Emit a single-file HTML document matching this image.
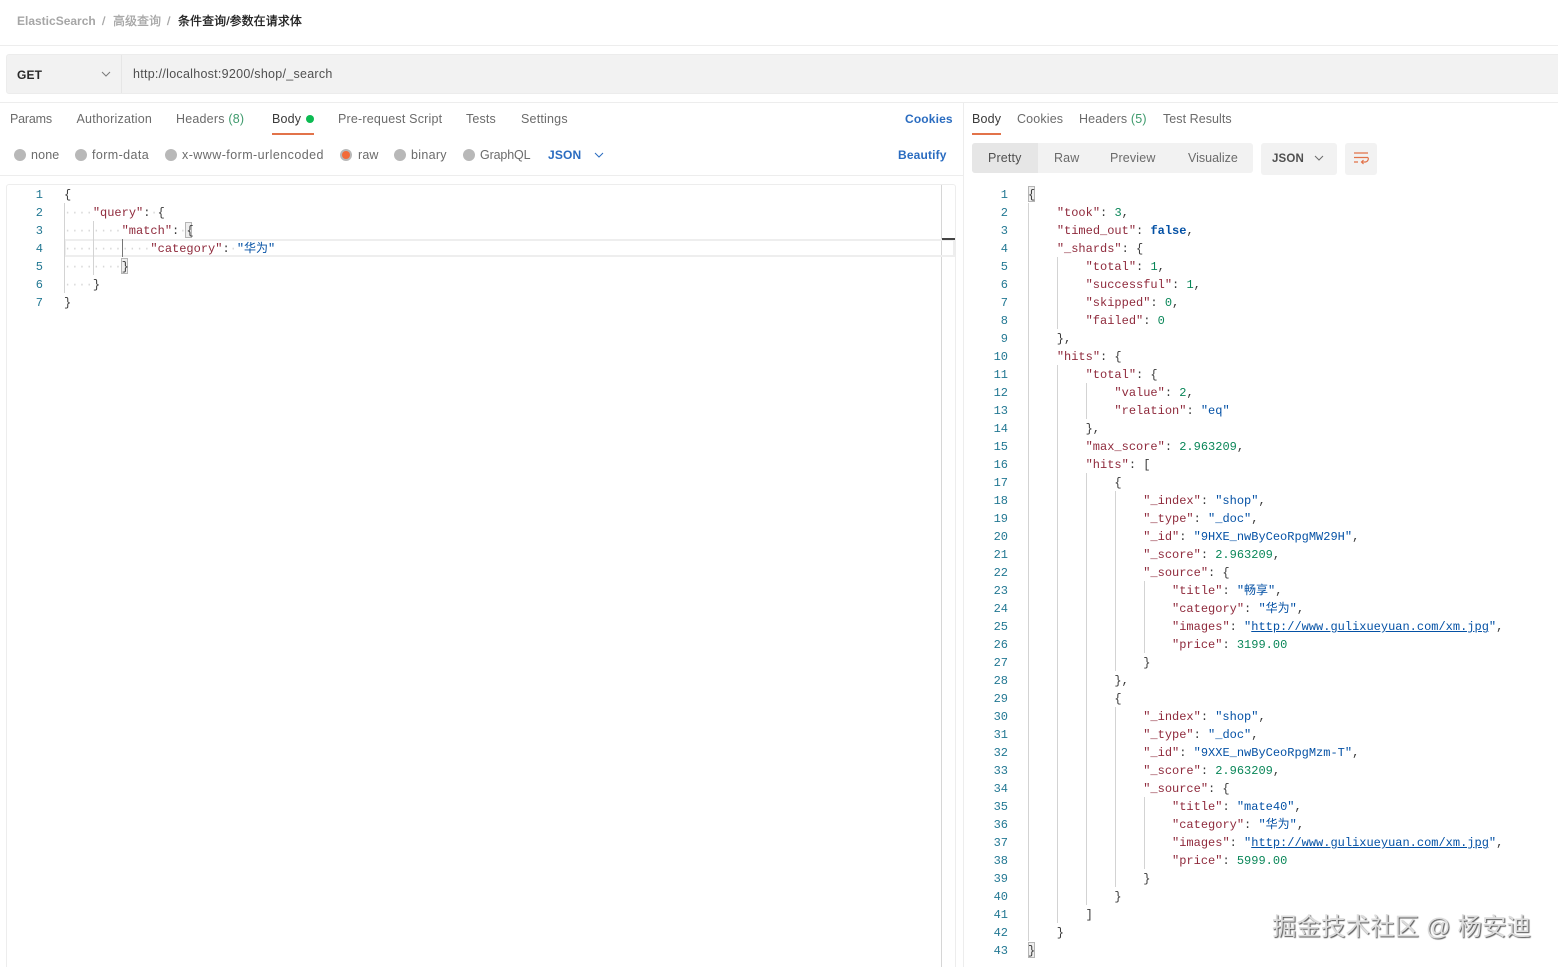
<!DOCTYPE html>
<html><head><meta charset="utf-8"><style>
html,body{margin:0;padding:0;background:#fff}
#r{position:relative;width:1558px;height:967px;overflow:hidden;background:#fff;font-family:"Liberation Sans","Noto Sans CJK SC",sans-serif;font-size:12.5px;color:#6b6b6b}
.a{position:absolute;white-space:pre}
.t{position:absolute;white-space:pre;line-height:18px;letter-spacing:.15px}
.bx{position:absolute}
.cd{position:absolute;white-space:pre;font-family:"Liberation Mono","Noto Sans CJK SC",monospace;font-size:12px;line-height:18px;height:18px;color:#3a3a3a;margin-top:1px}
.ln{position:absolute;font-family:"Liberation Mono",monospace;font-size:12px;line-height:18px;height:18px;color:#237893;text-align:right;width:30px;margin-top:1px}
.k{color:#8f2a3c}.s{color:#0451a5}.n{color:#098658}.b{color:#0451a5;font-weight:bold}
.u{text-decoration:underline}.d{color:#d8d8d8}
.g{position:absolute;width:1px;background:#d3d3d3}
.rd{position:absolute;width:12px;height:12px;border-radius:50%;background:#b8b8b8;top:149px}
.br{position:absolute;width:7px;height:16px;background:#eee;border:1px solid #b5b5b5;box-sizing:border-box}
</style></head><body><div id="r">
<div class="t" style="left:17px;top:12px;color:#a6a6a6;font-weight:bold;font-size:12px;letter-spacing:0">ElasticSearch</div>
<div class="t" style="left:102px;top:12px;color:#a6a6a6;font-size:12px;-webkit-text-stroke:.3px #a6a6a6">/</div>
<div class="t" style="left:113px;top:12px;color:#a6a6a6;font-size:12px;letter-spacing:0;-webkit-text-stroke:.3px #a6a6a6">高级查询</div>
<div class="t" style="left:167px;top:12px;color:#a6a6a6;font-size:12px;-webkit-text-stroke:.3px #a6a6a6">/</div>
<div class="t" style="left:178px;top:12px;color:#1c1c1c;font-size:12px;letter-spacing:.05px;-webkit-text-stroke:.3px #1c1c1c">条件查询/参数在请求体</div>
<div class="bx" style="left:0;top:45px;width:1558px;height:1px;background:#ededed"></div>
<div class="bx" style="left:6px;top:54px;width:1560px;height:40px;background:#f2f2f2;border:1px solid #ececec;box-sizing:border-box;border-radius:3px"></div>
<div class="bx" style="left:121px;top:55px;width:1px;height:38px;background:#e6e6e6"></div>
<div class="t" style="left:17px;top:66px;color:#2a2a2a;font-weight:bold;font-size:12px">GET</div>
<svg class="a" style="left:101px;top:71px" width="10" height="7" viewBox="0 0 10 7"><path d="M1 1l4 4 4-4" fill="none" stroke="#7a7a7a" stroke-width="1"/></svg>
<div class="t" style="left:133px;top:65px;color:#505050;letter-spacing:.27px">http://localhost:9200/shop/_search</div>
<div class="bx" style="left:0;top:102px;width:1558px;height:1px;background:#ededed"></div>
<div class="t" style="left:10px;top:110px;letter-spacing:-.2px">Params</div>
<div class="t" style="left:76.5px;top:110px;letter-spacing:.2px">Authorization</div>
<div class="t" style="left:176px;top:110px;letter-spacing:.2px">Headers <span style="color:#3e9a6c">(8)</span></div>
<div class="t" style="left:272px;top:110px;color:#3a3a3a">Body</div>
<div class="bx" style="left:306px;top:115px;width:8px;height:8px;border-radius:50%;background:#0cbb52"></div>
<div class="bx" style="left:272px;top:133px;width:42px;height:2px;background:#e2734a"></div>
<div class="t" style="left:338px;top:110px;letter-spacing:.2px">Pre-request Script</div>
<div class="t" style="left:466px;top:110px">Tests</div>
<div class="t" style="left:521px;top:110px;letter-spacing:.2px">Settings</div>
<div class="t" style="left:905px;top:110px;color:#2a6cc0;font-weight:bold;font-size:12px">Cookies</div>
<div class="rd" style="left:14px"></div><div class="t" style="left:31px;top:146px">none</div>
<div class="rd" style="left:75px"></div><div class="t" style="left:92px;top:146px;letter-spacing:.4px">form-data</div>
<div class="rd" style="left:165px"></div><div class="t" style="left:182px;top:146px;letter-spacing:.44px">x-www-form-urlencoded</div>
<div class="rd" style="left:340px"></div><div class="bx" style="left:342px;top:151px;width:8px;height:8px;border-radius:50%;background:#f26b3a"></div><div class="t" style="left:358px;top:146px">raw</div>
<div class="rd" style="left:394px"></div><div class="t" style="left:411px;top:146px;letter-spacing:.3px">binary</div>
<div class="rd" style="left:463px"></div><div class="t" style="left:480px;top:146px;letter-spacing:-.15px">GraphQL</div>
<div class="t" style="left:548px;top:146px;color:#2a6cc0;font-weight:bold;font-size:12px">JSON</div>
<svg class="a" style="left:594px;top:152px" width="10" height="7" viewBox="0 0 10 7"><path d="M1 1l4 4 4-4" fill="none" stroke="#2a6cc0" stroke-width="1"/></svg>
<div class="t" style="left:898px;top:146px;color:#2a6cc0;font-weight:bold;font-size:12px">Beautify</div>
<div class="bx" style="left:0;top:175px;width:963px;height:1px;background:#ededed"></div>
<div class="bx" style="left:963px;top:103px;width:1px;height:864px;background:#ededed"></div>
<div class="t" style="left:972px;top:110px;color:#3a3a3a">Body</div>
<div class="bx" style="left:972px;top:133px;width:29px;height:2px;background:#e2734a"></div>
<div class="t" style="left:1017px;top:110px">Cookies</div>
<div class="t" style="left:1079px;top:110px">Headers <span style="color:#3e9a6c">(5)</span></div>
<div class="t" style="left:1163px;top:110px;letter-spacing:.05px">Test Results</div>
<div class="bx" style="left:972px;top:143px;width:281px;height:30px;background:#f2f2f2;border-radius:3px"></div>
<div class="bx" style="left:972px;top:143px;width:66px;height:30px;background:#e6e6e6;border-radius:3px 0 0 3px"></div>
<div class="t" style="left:988px;top:149px;color:#505050">Pretty</div>
<div class="t" style="left:1054px;top:149px">Raw</div>
<div class="t" style="left:1110px;top:149px">Preview</div>
<div class="t" style="left:1188px;top:149px;letter-spacing:0">Visualize</div>
<div class="bx" style="left:1261px;top:143px;width:76px;height:32px;background:#f2f2f2;border-radius:3px"></div>
<div class="t" style="left:1272px;top:150px;color:#505050;font-weight:bold;font-size:11.5px">JSON</div>
<svg class="a" style="left:1314px;top:155px" width="10" height="7" viewBox="0 0 10 7"><path d="M1 1l4 4 4-4" fill="none" stroke="#6b6b6b" stroke-width="1"/></svg>
<div class="bx" style="left:1345px;top:143px;width:32px;height:32px;background:#f2f2f2;border-radius:3px"></div>
<svg class="a" style="left:1353px;top:151px" width="16" height="16" viewBox="0 0 16 16"><path d="M1 2h14M1 6.500h14M1 11h4M15 6.500c.8 1.500 0 4-2.500 4.500H8.500M10.500 9l-2 2 2 2" fill="none" stroke="#e2734a" stroke-width="1.200"/></svg>

<!-- left editor -->
<div class="bx" style="left:6px;top:184px;width:950px;height:800px;border:1px solid #ededed;box-sizing:border-box;border-radius:3px"></div>
<div class="bx" style="left:941px;top:185px;width:1px;height:782px;background:#d6d6d6"></div>
<div class="bx" style="left:64px;top:239px;width:891px;height:18px;border:2px solid #eee;box-sizing:border-box;border-right-width:2px"></div>
<div class="bx" style="left:942px;top:238px;width:13px;height:2px;background:#444"></div>
<div class="g" style="left:64px;top:203px;height:90px"></div>
<div class="g" style="left:93px;top:221px;height:54px"></div>
<div class="g" style="left:122px;top:239px;height:18px;background:#777"></div>
<div class="br" style="left:185px;top:222px"></div>
<div class="br" style="left:121px;top:258px"></div>
<div class="ln" style="left:13px;top:185px">1</div><div class="cd" style="left:64px;top:185px">{</div>
<div class="ln" style="left:13px;top:203px">2</div><div class="cd" style="left:64px;top:203px"><span class="d">····</span><span class="k">"query"</span>:<span class="d">·</span>{</div>
<div class="ln" style="left:13px;top:221px">3</div><div class="cd" style="left:64px;top:221px"><span class="d">········</span><span class="k">"match"</span>:<span class="d">·</span>{</div>
<div class="ln" style="left:13px;top:239px">4</div><div class="cd" style="left:64px;top:239px"><span class="d">············</span><span class="k">"category"</span>:<span class="d">·</span><span class="s">"华为"</span></div>
<div class="ln" style="left:13px;top:257px">5</div><div class="cd" style="left:64px;top:257px"><span class="d">········</span>}</div>
<div class="ln" style="left:13px;top:275px">6</div><div class="cd" style="left:64px;top:275px"><span class="d">····</span>}</div>
<div class="ln" style="left:13px;top:293px">7</div><div class="cd" style="left:64px;top:293px">}</div>

<!-- right editor -->
<div class="g" style="left:1028px;top:203px;height:738px"></div>
<div class="g" style="left:1057px;top:257px;height:72px"></div>
<div class="g" style="left:1057px;top:365px;height:558px"></div>
<div class="g" style="left:1086px;top:383px;height:36px"></div>
<div class="g" style="left:1086px;top:473px;height:432px"></div>
<div class="g" style="left:1115px;top:491px;height:180px"></div>
<div class="g" style="left:1115px;top:707px;height:180px"></div>
<div class="g" style="left:1144px;top:581px;height:72px"></div>
<div class="g" style="left:1144px;top:797px;height:72px"></div>
<div class="br" style="left:1028px;top:186px"></div>
<div class="br" style="left:1028px;top:942px"></div>
<div class="ln" style="left:978px;top:185px">1</div><div class="cd" style="left:1028px;top:185px">{</div>
<div class="ln" style="left:978px;top:203px">2</div><div class="cd" style="left:1028px;top:203px">    <span class="k">"took"</span>: <span class="n">3</span>,</div>
<div class="ln" style="left:978px;top:221px">3</div><div class="cd" style="left:1028px;top:221px">    <span class="k">"timed_out"</span>: <span class="b">false</span>,</div>
<div class="ln" style="left:978px;top:239px">4</div><div class="cd" style="left:1028px;top:239px">    <span class="k">"_shards"</span>: {</div>
<div class="ln" style="left:978px;top:257px">5</div><div class="cd" style="left:1028px;top:257px">        <span class="k">"total"</span>: <span class="n">1</span>,</div>
<div class="ln" style="left:978px;top:275px">6</div><div class="cd" style="left:1028px;top:275px">        <span class="k">"successful"</span>: <span class="n">1</span>,</div>
<div class="ln" style="left:978px;top:293px">7</div><div class="cd" style="left:1028px;top:293px">        <span class="k">"skipped"</span>: <span class="n">0</span>,</div>
<div class="ln" style="left:978px;top:311px">8</div><div class="cd" style="left:1028px;top:311px">        <span class="k">"failed"</span>: <span class="n">0</span></div>
<div class="ln" style="left:978px;top:329px">9</div><div class="cd" style="left:1028px;top:329px">    },</div>
<div class="ln" style="left:978px;top:347px">10</div><div class="cd" style="left:1028px;top:347px">    <span class="k">"hits"</span>: {</div>
<div class="ln" style="left:978px;top:365px">11</div><div class="cd" style="left:1028px;top:365px">        <span class="k">"total"</span>: {</div>
<div class="ln" style="left:978px;top:383px">12</div><div class="cd" style="left:1028px;top:383px">            <span class="k">"value"</span>: <span class="n">2</span>,</div>
<div class="ln" style="left:978px;top:401px">13</div><div class="cd" style="left:1028px;top:401px">            <span class="k">"relation"</span>: <span class="s">"eq"</span></div>
<div class="ln" style="left:978px;top:419px">14</div><div class="cd" style="left:1028px;top:419px">        },</div>
<div class="ln" style="left:978px;top:437px">15</div><div class="cd" style="left:1028px;top:437px">        <span class="k">"max_score"</span>: <span class="n">2.963209</span>,</div>
<div class="ln" style="left:978px;top:455px">16</div><div class="cd" style="left:1028px;top:455px">        <span class="k">"hits"</span>: [</div>
<div class="ln" style="left:978px;top:473px">17</div><div class="cd" style="left:1028px;top:473px">            {</div>
<div class="ln" style="left:978px;top:491px">18</div><div class="cd" style="left:1028px;top:491px">                <span class="k">"_index"</span>: <span class="s">"shop"</span>,</div>
<div class="ln" style="left:978px;top:509px">19</div><div class="cd" style="left:1028px;top:509px">                <span class="k">"_type"</span>: <span class="s">"_doc"</span>,</div>
<div class="ln" style="left:978px;top:527px">20</div><div class="cd" style="left:1028px;top:527px">                <span class="k">"_id"</span>: <span class="s">"9HXE_nwByCeoRpgMW29H"</span>,</div>
<div class="ln" style="left:978px;top:545px">21</div><div class="cd" style="left:1028px;top:545px">                <span class="k">"_score"</span>: <span class="n">2.963209</span>,</div>
<div class="ln" style="left:978px;top:563px">22</div><div class="cd" style="left:1028px;top:563px">                <span class="k">"_source"</span>: {</div>
<div class="ln" style="left:978px;top:581px">23</div><div class="cd" style="left:1028px;top:581px">                    <span class="k">"title"</span>: <span class="s">"畅享"</span>,</div>
<div class="ln" style="left:978px;top:599px">24</div><div class="cd" style="left:1028px;top:599px">                    <span class="k">"category"</span>: <span class="s">"华为"</span>,</div>
<div class="ln" style="left:978px;top:617px">25</div><div class="cd" style="left:1028px;top:617px">                    <span class="k">"images"</span>: <span class="s">"<span class="u">http://www.gulixueyuan.com/xm.jpg</span>"</span>,</div>
<div class="ln" style="left:978px;top:635px">26</div><div class="cd" style="left:1028px;top:635px">                    <span class="k">"price"</span>: <span class="n">3199.00</span></div>
<div class="ln" style="left:978px;top:653px">27</div><div class="cd" style="left:1028px;top:653px">                }</div>
<div class="ln" style="left:978px;top:671px">28</div><div class="cd" style="left:1028px;top:671px">            },</div>
<div class="ln" style="left:978px;top:689px">29</div><div class="cd" style="left:1028px;top:689px">            {</div>
<div class="ln" style="left:978px;top:707px">30</div><div class="cd" style="left:1028px;top:707px">                <span class="k">"_index"</span>: <span class="s">"shop"</span>,</div>
<div class="ln" style="left:978px;top:725px">31</div><div class="cd" style="left:1028px;top:725px">                <span class="k">"_type"</span>: <span class="s">"_doc"</span>,</div>
<div class="ln" style="left:978px;top:743px">32</div><div class="cd" style="left:1028px;top:743px">                <span class="k">"_id"</span>: <span class="s">"9XXE_nwByCeoRpgMzm-T"</span>,</div>
<div class="ln" style="left:978px;top:761px">33</div><div class="cd" style="left:1028px;top:761px">                <span class="k">"_score"</span>: <span class="n">2.963209</span>,</div>
<div class="ln" style="left:978px;top:779px">34</div><div class="cd" style="left:1028px;top:779px">                <span class="k">"_source"</span>: {</div>
<div class="ln" style="left:978px;top:797px">35</div><div class="cd" style="left:1028px;top:797px">                    <span class="k">"title"</span>: <span class="s">"mate40"</span>,</div>
<div class="ln" style="left:978px;top:815px">36</div><div class="cd" style="left:1028px;top:815px">                    <span class="k">"category"</span>: <span class="s">"华为"</span>,</div>
<div class="ln" style="left:978px;top:833px">37</div><div class="cd" style="left:1028px;top:833px">                    <span class="k">"images"</span>: <span class="s">"<span class="u">http://www.gulixueyuan.com/xm.jpg</span>"</span>,</div>
<div class="ln" style="left:978px;top:851px">38</div><div class="cd" style="left:1028px;top:851px">                    <span class="k">"price"</span>: <span class="n">5999.00</span></div>
<div class="ln" style="left:978px;top:869px">39</div><div class="cd" style="left:1028px;top:869px">                }</div>
<div class="ln" style="left:978px;top:887px">40</div><div class="cd" style="left:1028px;top:887px">            }</div>
<div class="ln" style="left:978px;top:905px">41</div><div class="cd" style="left:1028px;top:905px">        ]</div>
<div class="ln" style="left:978px;top:923px">42</div><div class="cd" style="left:1028px;top:923px">    }</div>
<div class="ln" style="left:978px;top:941px">43</div><div class="cd" style="left:1028px;top:941px">}</div>

<div class="a" style="left:1272px;top:912px;font-size:24.5px;line-height:32px;color:#dcdcdc;text-shadow:1px 1px 1px #555,-.5px -.5px 0 #fff">掘金技术社区 @ 杨安迪</div>
</div></body></html>
